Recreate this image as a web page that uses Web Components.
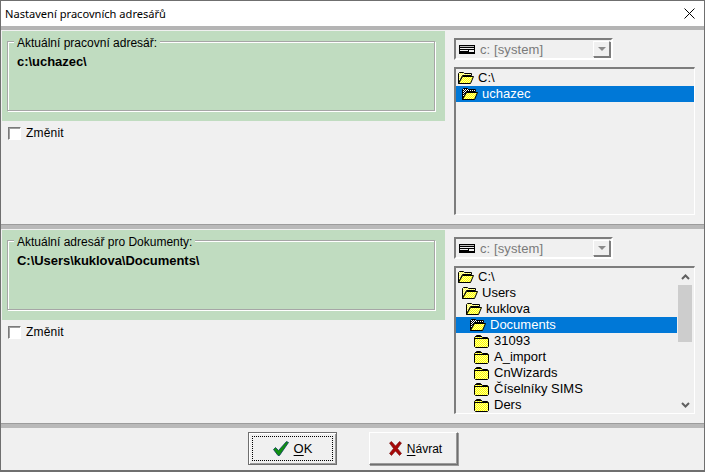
<!DOCTYPE html>
<html lang="cs">
<head>
<meta charset="utf-8">
<title>Nastavení pracovních adresářů</title>
<style>
  html, body { margin: 0; padding: 0; background: #f0f0f0; }
  body { font: 12px "Liberation Sans", Arial, sans-serif; color: #000; }
</style>
</head>
<body>

<win-dialog heading="Nastavení pracovních adresářů">
  <dir-section label="Aktuální pracovní adresář:" path="c:\uchazec\">
    <dir-tree>
      <dir-row level="0" kind="open">C:\</dir-row>
      <dir-row level="1" kind="open" selected>uchazec</dir-row>
    </dir-tree>
  </dir-section>
  <win-separator></win-separator>
  <dir-section label="Aktuální adresář pro Dokumenty:" path="C:\Users\kuklova\Documents\">
    <dir-tree scroll>
      <dir-row level="0" kind="open">C:\</dir-row>
      <dir-row level="1" kind="open">Users</dir-row>
      <dir-row level="2" kind="open">kuklova</dir-row>
      <dir-row level="3" kind="open" selected>Documents</dir-row>
      <dir-row level="4" kind="closed">31093</dir-row>
      <dir-row level="4" kind="closed">A_import</dir-row>
      <dir-row level="4" kind="closed">CnWizards</dir-row>
      <dir-row level="4" kind="closed">Číselníky SIMS</dir-row>
      <dir-row level="4" kind="closed">Ders</dir-row>
    </dir-tree>
  </dir-section>
  <win-separator></win-separator>
  <dialog-footer>
    <win-button key="O" rest="K" icon="ok" default></win-button>
    <win-button key="N" rest="ávrat" icon="cancel"></win-button>
  </dialog-footer>
</win-dialog>

<script>
class WinDialog extends HTMLElement {
  constructor() {
    super();
    this.attachShadow({ mode: 'open' });
  }

  connectedCallback() {
    const heading = this.getAttribute('heading') || '';
    this.shadowRoot.innerHTML = `
      <style>
        :host {
          display: flex;
          flex-direction: column;
          box-sizing: border-box;
          width: 705px;
          height: 472px;
          background: #f0f0f0;
          border: solid #6f6f6f;
          border-width: 1px 1px 2px 1px;
          overflow: hidden;
        }
        .title {
          display: flex;
          align-items: center;
          justify-content: space-between;
          flex: none;
          height: 25px;
          padding: 0 9px 0 4px;
          background: #fff;
          font: 11.1px "Noto Sans", "Open Sans", sans-serif;
          color: #000;
        }
        .first {
          flex: none;
          height: 4px;
          background: #b4b4b4;
        }
        svg { display: block; }
      </style>
      <div class="title">
        <span>${heading}</span>
        <svg width="11" height="11" viewBox="0 0 11 11" fill="none" stroke="#000" stroke-width="1">
          <path d="M0.5 0.5L10.5 10.5M10.5 0.5L0.5 10.5"/>
        </svg>
      </div>
      <div class="first"></div>
      <slot></slot>
    `;
  }
}

class WinSeparator extends HTMLElement {
  constructor() {
    super();
    this.attachShadow({ mode: 'open' });
    this.shadowRoot.innerHTML = `
      <style>
        :host {
          display: block;
          flex: none;
          box-sizing: border-box;
          height: 5px;
          background: #b9b9b9;
          border-top: 1px solid #9c9c9c;
        }
      </style>
    `;
  }
}

class DirSection extends HTMLElement {
  constructor() {
    super();
    this.attachShadow({ mode: 'open' });
  }

  connectedCallback() {
    const label = this.getAttribute('label') || '';
    const path = this.getAttribute('path') || '';
    this.shadowRoot.innerHTML = `
      <style>
        :host {
          display: flex;
          flex: none;
          height: 194px;
          box-sizing: border-box;
          padding-left: 1px;
        }
        .left { width: 443px; flex: none; padding-top: 1px; }
        .green {
          box-sizing: border-box;
          height: 90px;
          padding: 10px 10px 10px 5px;
          background: #c0dcc0;
        }
        .group {
          position: relative;
          box-sizing: border-box;
          height: 70px;
          padding: 13px 9px 0 9px;
          border: 1px solid #a6a6a6;
          box-shadow: 1px 1px 0 #fff, inset 1px 1px 0 #fff;
        }
        .legend {
          position: absolute;
          left: 6px;
          top: -6px;
          padding: 0 3px 0 3px;
          background: #c0dcc0;
          line-height: 14px;
        }
        .path { font-weight: bold; font-size: 13px; line-height: 14px; letter-spacing: -0.04px; }
        .check { margin: 6px 0 0 6px; }
        .right {
          display: flex;
          flex-direction: column;
          gap: 7px;
          padding: 8px 0 0 9px;
        }
      </style>
      <div class="left">
        <div class="green">
          <div class="group">
            <div class="legend">${label}</div>
            <div class="path">${path}</div>
          </div>
        </div>
        <div class="check"><win-check>Změnit</win-check></div>
      </div>
      <div class="right">
        <drive-combo>c: [system]</drive-combo>
        <slot></slot>
      </div>
    `;
  }
}

class WinCheck extends HTMLElement {
  constructor() {
    super();
    this.attachShadow({ mode: 'open' });
    this.shadowRoot.innerHTML = `
      <style>
        :host { display: flex; align-items: center; gap: 5px; height: 13px; line-height: 13px; letter-spacing: 0.2px; }
        .box {
          box-sizing: border-box;
          width: 13px;
          height: 13px;
          background: #fff;
          border: 1px solid;
          border-color: #7a7a7a #fff #fff #7a7a7a;
          box-shadow: inset 1px 1px 0 #a0a0a0;
        }
      </style>
      <span class="box"></span><slot></slot>
    `;
  }
}

class DriveCombo extends HTMLElement {
  constructor() {
    super();
    this.attachShadow({ mode: 'open' });
    this.shadowRoot.innerHTML = `
      <style>
        :host {
          display: flex;
          align-items: center;
          box-sizing: border-box;
          width: 159px;
          height: 22px;
          padding: 0 1px 0 3px;
          border: 2px solid;
          border-color: #7d7d7d #fff #fff #7d7d7d;
          color: #7a7a7a;
          font-size: 13px;
          letter-spacing: 0.1px;
        }
        svg { display: block; flex: none; margin-right: 5px; }
        .text { flex: 1; }
        .btn {
          display: flex;
          align-items: center;
          justify-content: center;
          box-sizing: border-box;
          width: 17px;
          height: 16px;
          background: #f0f0f0;
          border: 1px solid;
          border-color: #fff #7d7d7d #7d7d7d #fff;
          box-shadow: 1px 1px 0 #7d7d7d;
        }
        .arrow {
          width: 0;
          height: 0;
          border: 4px solid transparent;
          border-top: 4px solid #8a8a8a;
          border-bottom: 0;
        }
      </style>
      <svg width="16" height="9" viewBox="0 0 16 9">
        <rect width="16" height="9" fill="#000"/>
        <rect x="1" y="1" width="14" height="1" fill="#bdbdbd"/>
        <rect x="1" y="3" width="14" height="1" fill="#f0f0f0"/>
        <rect x="1" y="5" width="8" height="1" fill="#f0f0f0"/>
        <rect x="10" y="5" width="5" height="2" fill="#f0f0f0"/>
      </svg>
      <span class="text"><slot></slot></span>
      <span class="btn"><span class="arrow"></span></span>
    `;
  }
}

class DirTree extends HTMLElement {
  constructor() {
    super();
    this.attachShadow({ mode: 'open' });
  }

  connectedCallback() {
    const scroll = this.hasAttribute('scroll');
    this.shadowRoot.innerHTML = `
      <style>
        :host {
          display: flex;
          box-sizing: border-box;
          width: 241px;
          height: 148px;
          border: solid;
          border-width: 2px 1px 1px 2px;
          border-color: #7d7d7d #fff #fff #7d7d7d;
          background: #f0f0f0;
        }
        .rows { flex: 1; min-width: 0; padding-top: 1px; overflow: hidden; }
        .bar {
          display: flex;
          flex-direction: column;
          flex: none;
          width: 17px;
        }
        .btn { display: flex; align-items: center; justify-content: center; flex: none; height: 17px; }
        .thumb { flex: none; height: 57px; margin: 0 2px 0 1px; background: #cdcdcd; }
        .rest { flex: 1; }
        svg { display: block; }
      </style>
      <div class="rows"><slot></slot></div>
      ${scroll ? `
      <div class="bar">
        <div class="btn"><svg width="9" height="6" viewBox="0 0 9 6" fill="none" stroke="#606060" stroke-width="2"><path d="M1 5L4.5 1.5L8 5"/></svg></div>
        <div class="thumb"></div>
        <div class="rest"></div>
        <div class="btn"><svg width="9" height="6" viewBox="0 0 9 6" fill="none" stroke="#606060" stroke-width="2"><path d="M1 1L4.5 4.5L8 1"/></svg></div>
      </div>` : ''}
    `;
  }
}

let ditherCount = 0;

class DirRow extends HTMLElement {
  constructor() {
    super();
    this.attachShadow({ mode: 'open' });
  }

  connectedCallback() {
    const level = Number(this.getAttribute('level') || 0);
    const kind = this.getAttribute('kind') || 'closed';
    const selected = this.hasAttribute('selected');
    const id = `dither-${ditherCount++}`;
    const icon = kind === 'open' ? `
      <svg width="16" height="12" viewBox="0 0 16 12">
        <defs>
          ${this.pattern(id, '#ffff00', '#ffff98')}
          ${this.pattern(`${id}-back`, selected ? '#000000' : '#ffff50', selected ? '#ffffff' : '#ffffc0')}
        </defs>
        <path d="M0.5 11.5V1.5L1.5 0.5H5.5L6.5 1.5H13.5V3.5H4.5L0.5 11.5Z" fill="url(#${id}-back)" stroke="#000"/>
        <path d="M0.5 11.5L4.5 4.5H15.5L12.5 11.5Z" fill="url(#${id})" stroke="#000"/>
      </svg>` : `
      <svg width="16" height="13" viewBox="0 0 16 13">
        <defs>${this.pattern(id, '#ffff00', '#ffff98')}</defs>
        <path d="M1.5 12.5L0.5 11.5V2.5L2.5 0.5H6.5L8.5 2.5H13.5L14.5 3.5V11.5L13.5 12.5Z" fill="url(#${id})" stroke="#000"/>
        <path d="M1 1.5H7M1 3.5H14" stroke="#000"/>
      </svg>`;
    this.shadowRoot.innerHTML = `
      <style>
        :host {
          display: flex;
          align-items: center;
          box-sizing: border-box;
          height: 16px;
          padding-left: ${2 + level * 4}px;
          font-size: 13px;
          line-height: 16px;
          white-space: nowrap;
          color: ${selected ? '#fff' : '#000'};
          background: ${selected ? '#0078d7' : 'transparent'};
        }
        svg { display: block; flex: none; margin-right: 4px; }
      </style>
      ${icon}<slot></slot>
    `;
  }

  pattern(id, base, dot) {
    return `<pattern id="${id}" width="2" height="2" patternUnits="userSpaceOnUse">
      <rect width="2" height="2" fill="${base}"/>
      <rect width="1" height="1" fill="${dot}"/>
      <rect x="1" y="1" width="1" height="1" fill="${dot}"/>
    </pattern>`;
  }
}

class DialogFooter extends HTMLElement {
  constructor() {
    super();
    this.attachShadow({ mode: 'open' });
    this.shadowRoot.innerHTML = `
      <style>
        :host {
          display: flex;
          flex: 1;
          gap: 32px;
          padding: 4px 0 0 247px;
        }
      </style>
      <slot></slot>
    `;
  }
}

class WinButton extends HTMLElement {
  constructor() {
    super();
    this.attachShadow({ mode: 'open' });
  }

  connectedCallback() {
    const key = this.getAttribute('key') || '';
    const rest = this.getAttribute('rest') || '';
    const isDefault = this.hasAttribute('default');
    const icon = this.getAttribute('icon') === 'ok' ? `
      <svg width="16" height="15" viewBox="0 0 16 15">
        <path d="M0.5 8.5L2.5 6.5L5.5 9.5L13.5 0.5L15.5 1.5L6.5 14.5H5Z" fill="#109010" stroke="#0a3a60" stroke-width="0.8"/>
      </svg>` : `
      <svg width="13" height="15" viewBox="0 0 13 15">
        <path d="M0.5 2L2.5 0.5L6.5 5L10.5 0.5L12.5 2L8.5 7.5L12.5 12.5L10.5 14.5L6.5 10L2.5 14.5L0.5 12.5L4.5 7.5Z" fill="#a80808" stroke="#701010" stroke-width="0.6"/>
      </svg>`;
    this.shadowRoot.innerHTML = `
      <style>
        :host {
          display: flex;
          align-items: center;
          justify-content: center;
          position: relative;
          box-sizing: border-box;
          width: 89px;
          height: 33px;
          gap: 5px;
          padding-left: ${isDefault ? '0' : '4px'};
          background: #f0f0f0;
          font-size: ${isDefault ? '13px' : '12px'};
          border: 1px solid;
          border-color: ${isDefault ? '#6f6f6f' : '#fff'} #6f6f6f #6f6f6f ${isDefault ? '#6f6f6f' : '#fff'};
          box-shadow: ${isDefault
            ? 'inset 1px 1px 0 #fff, inset -1px -1px 0 #9a9a9a'
            : 'inset -1px -1px 0 #9a9a9a, 1px 1px 0 #9a9a9a'};
        }
        .focus {
          position: absolute;
          inset: 3px;
          border: 1px dotted #000;
        }
        u { text-underline-offset: 2px; }
        svg { display: block; flex: none; }
      </style>
      ${isDefault ? '<span class="focus"></span>' : ''}
      ${icon}<span><u>${key}</u>${rest}</span>
    `;
  }
}

customElements.define('win-dialog', WinDialog);
customElements.define('win-separator', WinSeparator);
customElements.define('dir-section', DirSection);
customElements.define('win-check', WinCheck);
customElements.define('drive-combo', DriveCombo);
customElements.define('dir-tree', DirTree);
customElements.define('dir-row', DirRow);
customElements.define('dialog-footer', DialogFooter);
customElements.define('win-button', WinButton);
</script>
</body>
</html>
